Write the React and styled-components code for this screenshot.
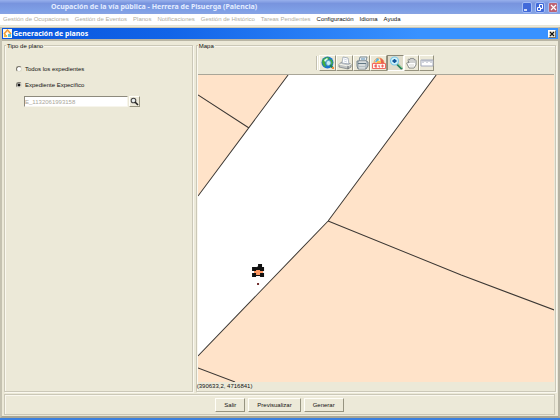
import React, { useState } from "react";
import styled, { createGlobalStyle, css } from "styled-components";

const Global = createGlobalStyle`
  *, *::before, *::after { box-sizing: border-box; }
  body { margin: 0; background: #ece9d8; }
  button, input { font: inherit; color: inherit; margin: 0; padding: 0; }
`;

const Window = styled.div`
  display: flex;
  flex-direction: column;
  min-height: 100vh;
  background: #ece9d8;
  border-bottom: 2px solid #3a80e0;
  font: 6px/8px "Liberation Sans", Arial, sans-serif;
  color: #111;
`;

const TitleBar = styled.header`
  display: flex;
  align-items: center;
  height: 14px;
  padding: 0 2px 0 51px;
  background: linear-gradient(#98b0ec, #7894de 25%, #7e9fe6 75%, #88a4e4);
`;

const Title = styled.h1`
  flex: 1;
  margin: 0;
  font: bold 7px/10px "Noto Sans", sans-serif;
  color: #e4ecff;
`;

const WindowControls = styled.div`
  display: flex;
  gap: 3px;
`;

const WindowButton = styled.button`
  display: flex;
  width: 10px;
  height: 11px;
  border: 1px solid #a4bcf4;
  border-radius: 2px;
  background: ${(p) => (p.$danger ? "#bd6275" : "#4169d9")};
  svg { display: block; width: 8px; height: 9px; }
`;

const Menu = styled.nav`
  display: flex;
  align-items: flex-start;
  gap: 6px;
  height: 12px;
  padding: 1px 3px 0;
  background: #fff;
  border-bottom: 1px solid #e6e3d4;
`;

const MenuItem = styled.button`
  border: 0;
  background: none;
  line-height: 9px;
  white-space: nowrap;
  color: #111;
  &:disabled { color: #b1ada0; }
`;

const Dialog = styled.main`
  flex: 1;
  display: flex;
  flex-direction: column;
  margin-top: 1px;
  border: 2px solid #aaa794;
  border-top: 1px solid #c9c6b7;
  border-left-color: #c5c2b1;
  border-right-color: #b5b2a2;
`;

const DialogBar = styled.header`
  display: flex;
  align-items: center;
  gap: 1px;
  height: 11px;
  padding: 0 2px 0 1px;
  background: linear-gradient(90deg, #0855dd, #1264e8 30%, #3992ff 75%, #3992ff);
`;

const DialogTitle = styled.h2`
  flex: 1;
  margin: 0;
  font: bold 7px/10px "Noto Sans", sans-serif;
  color: #fff;
`;

const AppIcon = styled.svg`
  width: 9px;
  height: 9px;
`;

const CloseButton = styled.button`
  display: flex;
  width: 8px;
  height: 8px;
  border: 1px solid #fff;
  border-right-color: #77746a;
  border-bottom-color: #77746a;
  background: #ece9d8;
  svg { width: 6px; height: 6px; }
`;

const Panels = styled.div`
  flex: 1;
  display: grid;
  grid-template-columns: 11fr 21fr;
  gap: 3px;
  padding: 4px 2px 0;
  border-top: 2px solid #b9b5a4;
`;

const Group = styled.section`
  display: flex;
  flex-direction: column;
  min-width: 0;
  border: 1px solid #cbc8b8;
  box-shadow: inset 1px 1px #faf8ef, 1px 1px #faf8ef;
`;

const GroupTitle = styled.h3`
  align-self: flex-start;
  margin: -4px 0 0 1px;
  padding: 0 1px;
  background: #ece9d8;
  font: inherit;
`;

const Options = styled.form`
  display: flex;
  flex-direction: column;
  gap: 8px;
  padding: 15px 11px;
`;

const Option = styled.label`
  display: flex;
  align-items: center;
  gap: 3px;
`;

const Radio = styled.input`
  appearance: none;
  width: 6px;
  height: 6px;
  border: 1px solid #77746a;
  border-right-color: #dedbcb;
  border-bottom-color: #dedbcb;
  border-radius: 50%;
  background: #fff;
  &:checked { background: radial-gradient(#111 0 1px, #fff 2px); }
`;

const Lookup = styled.div`
  display: flex;
  gap: 1px;
  margin: -1px 0 0 8px;
`;

const RecordInput = styled.input`
  width: 104px;
  height: 11px;
  border: 1px solid #8d8a7d;
  border-right-color: #f7f5ec;
  border-bottom-color: #f7f5ec;
  background: #fff;
  &:disabled { color: #aaa69a; }
`;

const raised = css`
  border: 1px solid #fffef8;
  border-right-color: #96937f;
  border-bottom-color: #96937f;
  background: #ece9d8;
`;

const LookupButton = styled.button`
  ${raised}
  width: 11px;
  height: 11px;
  svg { display: block; width: 9px; height: 9px; }
`;

const Toolbar = styled.div`
  display: flex;
  align-items: center;
  justify-content: center;
  height: 24px;
  padding: 1px 1px 0 0;
`;

const Grip = styled.span`
  width: 2px;
  height: 14px;
  margin-right: 1px;
  border-left: 1px solid #c3c0b0;
  border-right: 1px solid #fff;
`;

const Tool = styled.button`
  ${raised}
  display: grid;
  place-items: center;
  width: ${(p) => (p.$narrow ? "15px" : "17px")};
  height: 16px;
  svg { display: block; width: 14px; height: 14px; }
  &[aria-pressed="true"] {
    border-color: #8c8979 #fff #fff #8c8979;
    background: #dfdccb;
  }
`;

const MapView = styled.svg`
  flex: 1 1 0;
  display: block;
  width: calc(100% - 2px);
  min-height: 0;
  margin-left: 1px;
  border-top: 1px solid #a9a698;
  background: #fff;
`;

const Coordinates = styled.output`
  height: 9px;
  line-height: 9px;
`;

const Footer = styled.footer`
  display: flex;
  justify-content: center;
  align-items: center;
  gap: 3px;
  height: 21px;
  margin: 2px 3px 1px 2px;
  border: 1px solid #cbc8b8;
  box-shadow: inset 1px 1px #faf8ef;
`;

const ActionButton = styled.button`
  ${raised}
  height: 14px;
  padding: 0 8px;
`;

const Globe = () => (
  <svg viewBox="0 0 14 14">
    <circle cx="6.5" cy="6.5" r="6" fill="#1c74cf" />
    <path d="M1 6 2 3 6 1 9 2 7 4 5 5 4 7 5 10 4 11 2 9ZM9 3l2 1 1 3-2 3-2-4Z" fill="#42ad3f" />
    <path d="m3 4 3-2 1 1-3 3Z" fill="#d9f5ff" />
    <circle cx="7.5" cy="7" r="2.5" fill="#c4ecf4" stroke="#5da5c4" />
    <path d="m9 9 3 3" stroke="#1f7d51" strokeWidth="2" />
    <path d="M11 11h2v2h-2Z" fill="#ef8a3a" />
  </svg>
);

const Printer = () => (
  <svg viewBox="0 0 14 14">
    <path d="M1 8 4 6l9 2v3l-3 2-9-2Z" fill="#c3c6c6" stroke="#7f8588" strokeWidth=".8" />
    <path d="M4 7 5 1l5 1 1 6Z" fill="#fff" stroke="#9aa5b3" strokeWidth=".8" />
    <path d="m6 3 3 1M6 5l3 1" stroke="#bac6d8" strokeWidth=".7" />
    <path d="m1 8 9 2 3-2" fill="none" stroke="#f6f6ee" />
    <path d="M10 10v3" stroke="#646a6d" />
  </svg>
);

const PrintStack = () => (
  <svg viewBox="0 0 14 14">
    <path d="M5 1h7l-1 4H4Z" fill="#eef2f3" stroke="#7c8e99" />
    <path d="M2 5h9l2 1v4l-2 3H3l-1-3Z" fill="#b4bec2" stroke="#78868e" />
    <path d="M4 6h7M4 9h6M4 12h6" stroke="#f8faf7" />
    <path d="M3 7h8v1H3Z" fill="#5f7682" />
    <path d="M6 3h4" stroke="#578bb2" />
  </svg>
);

const FileBadge = () => (
  <svg viewBox="0 0 14 14">
    <path d="M2 7a5 5 0 0 1 10 0Z" fill="#fbe8cf" stroke="#f1a45c" />
    <path d="M3 6 5 2l2 1-1 3Z" fill="#5bb8de" />
    <path d="m8 2 3 2 1 3H9Z" fill="#e8604c" />
    <path d="M5 5h4v2H5Z" fill="#f5c14e" />
    <path d="M.5 7.5h13v5H.5Z" fill="#fff4f0" stroke="#f4695e" />
    <path d="M5 9H3v2h2M3 10h2M7 9v2h1M10 9h1v2h-1Z" fill="none" stroke="#e63b35" strokeWidth=".8" />
  </svg>
);

const ZoomTool = () => (
  <svg viewBox="0 0 14 14">
    <path d="m8 8 5 5" stroke="#258061" strokeWidth="2.4" />
    <path d="m9 8 4 4" stroke="#9ddc92" strokeWidth=".8" />
    <circle cx="5.5" cy="5" r="4" fill="#d2f3fa" stroke="#7cc8e8" strokeWidth="1.2" />
    <path d="M5.5 3v4M3.5 5h4" stroke="#13569a" strokeWidth="1.8" />
  </svg>
);

const Hand = () => (
  <svg viewBox="0 0 14 14">
    <path d="M4 12 2 8c-1-2 1-2 2-1L3 4c0-1 1-1 2 0V3c0-1 2-1 2 0 0-1 2-1 2 0v1c1-1 2 0 2 1v4l-2 3Z" fill="#fff" stroke="#777a79" strokeWidth=".9" />
    <path d="M5 4v3M7 3v4M9 4v3" stroke="#8b8e8b" strokeWidth=".8" />
    <path d="M4 9h5M5 11h4" stroke="#d3d3cd" />
  </svg>
);

const Ruler = () => (
  <svg viewBox="0 0 14 14">
    <path d="M1 4h12v6H1Z" fill="#fff" stroke="#a4aabc" />
    <path d="M3 4v3M5 4v2M7 4v3M9 4v2M11 4v3" stroke="#8f98aa" strokeWidth=".8" />
  </svg>
);

const menuItems = [
  ["Gestión de Ocupaciones", true],
  ["Gestión de Eventos", true],
  ["Planos", true],
  ["Notificaciones", true],
  ["Gestión de Histórico", true],
  ["Tareas Pendientes", true],
  ["Configuración", false],
  ["Idioma", false],
  ["Ayuda", false],
];

const tools = [
  { label: "Vista general", Icon: Globe },
  { label: "Imprimir", Icon: Printer },
  { label: "Imprimir serie", Icon: PrintStack },
  { label: "Expediente", Icon: FileBadge },
  { label: "Zoom", Icon: ZoomTool },
  { label: "Desplazar", Icon: Hand, narrow: true },
  { label: "Medir", Icon: Ruler, narrow: true },
];

export default function App() {
  const [scope, setScope] = useState("one");
  const [tool, setTool] = useState("Zoom");

  return (
    <>
      <Global />
      <Window>
        <TitleBar>
          <Title>Ocupación de la vía pública - Herrera de Pisuerga (Palencia)</Title>
          <WindowControls>
            <WindowButton aria-label="Minimizar">
              <svg viewBox="0 0 8 9"><path d="M1 7h3" stroke="#fff" strokeWidth="1.5" /></svg>
            </WindowButton>
            <WindowButton aria-label="Restaurar">
              <svg viewBox="0 0 8 9"><path d="M3.5 4V1.5h3v4H5M1.500 4.500h3v3h-3Z" fill="none" stroke="#fff" /></svg>
            </WindowButton>
            <WindowButton aria-label="Cerrar ventana" $danger>
              <svg viewBox="0 0 8 9"><path d="m2 2 5 5m0-5-5 5" stroke="#fff" strokeWidth="1.2" /></svg>
            </WindowButton>
          </WindowControls>
        </TitleBar>
        <Menu>
          {menuItems.map(([label, disabled]) => (
            <MenuItem key={label} disabled={disabled}>{label}</MenuItem>
          ))}
        </Menu>
        <Dialog>
          <DialogBar>
            <AppIcon viewBox="0 0 9 9">
              <path d="M0 0h9v9H0Z" fill="#fff7e6" />
              <path d="M1 5 4.5 1 8 5" fill="none" stroke="#f39a31" strokeWidth="1.5" />
              <path d="M1 5h3v3H1Z" fill="#f0b549" />
              <path d="M5 5h3v3H5Z" fill="#5bc3d9" />
              <path d="M3 4h2v2H3Z" fill="#fff" />
            </AppIcon>
            <DialogTitle>Generación de planos</DialogTitle>
            <CloseButton aria-label="Cerrar">
              <svg viewBox="0 0 6 6"><path d="m1 1 4 4m0-4L1 5" stroke="#111" strokeWidth="1.2" /></svg>
            </CloseButton>
          </DialogBar>
          <Panels>
            <Group>
              <GroupTitle>Tipo de plano</GroupTitle>
              <Options>
                <Option>
                  <Radio type="radio" name="scope" checked={scope === "all"} onChange={() => setScope("all")} />
                  Todos los expedientes
                </Option>
                <Option>
                  <Radio type="radio" name="scope" checked={scope === "one"} onChange={() => setScope("one")} />
                  Expediente Expecífico
                </Option>
                <Lookup>
                  <RecordInput aria-label="Número de expediente" defaultValue="E_1132061993158" disabled />
                  <LookupButton type="button" aria-label="Buscar expediente">
                    <svg viewBox="0 0 9 9">
                      <circle cx="3.5" cy="3.5" r="2.3" fill="#e8eeee" stroke="#444" strokeWidth="1.1" />
                      <path d="m5 5 3 3" stroke="#222" strokeWidth="1.6" />
                    </svg>
                  </LookupButton>
                </Lookup>
              </Options>
            </Group>
            <Group>
              <GroupTitle>Mapa</GroupTitle>
              <Toolbar role="toolbar" aria-label="Herramientas del mapa">
                <Grip />
                {tools.map(({ label, Icon, narrow }) => (
                  <Tool key={label} aria-label={label} aria-pressed={tool === label} $narrow={narrow} onClick={() => setTool(label)}>
                    <Icon />
                  </Tool>
                ))}
              </Toolbar>
              <MapView viewBox="0 0 356 307" preserveAspectRatio="none" role="img" aria-label="Mapa de parcelas">
                <path d="M0 0H90L0 121Z" fill="#ffe3c9" />
                <path d="M238 0H356V307H0V281L130 146Z" fill="#ffe3c9" />
                <path d="M90 0 0 121M0 20 51 53M238 0 130 146 0 281M130 146 263 200 356 235M0 293 37 307" fill="none" stroke="#3b3733" />
                <path d="m56 193 5-2 4 2v8h-9Z" fill="#111" />
                <path d="M56 196l2-1h5l2 1v3l-2 1h-5l-2-1Z" fill="#ff9963" />
                <path d="M54 192h4v4h-4ZM62 192h4v4h-4ZM54 198h4v4h-4ZM62 198h4v4h-4ZM60 189h4v3h-4Z" fill="#111" />
                <path d="M59 208h2v2h-2Z" fill="#702e2e" />
              </MapView>
              <Coordinates>(390633,2, 4716841)</Coordinates>
            </Group>
          </Panels>
          <Footer>
            <ActionButton>Salir</ActionButton>
            <ActionButton>Previsualizar</ActionButton>
            <ActionButton>Generar</ActionButton>
          </Footer>
        </Dialog>
      </Window>
    </>
  );
}
